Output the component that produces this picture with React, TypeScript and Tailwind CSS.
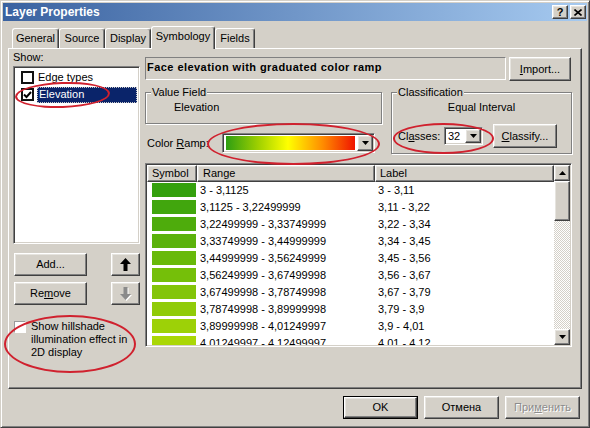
import React from "react";

const raised =
  "border border-t-white border-l-white border-r-[#404040] border-b-[#404040] shadow-[inset_-1px_-1px_0_#808080,inset_1px_1px_0_#e6e4df]";
const sunken =
  "border border-t-[#808080] border-l-[#808080] border-r-white border-b-white shadow-[inset_1px_1px_0_#404040,inset_-1px_-1px_0_#d4d0c8]";

const rows = [
  ["3 - 3,1125", "3 - 3,11"],
  ["3,1125 - 3,22499999", "3,11 - 3,22"],
  ["3,22499999 - 3,33749999", "3,22 - 3,34"],
  ["3,33749999 - 3,44999999", "3,34 - 3,45"],
  ["3,44999999 - 3,56249999", "3,45 - 3,56"],
  ["3,56249999 - 3,67499998", "3,56 - 3,67"],
  ["3,67499998 - 3,78749998", "3,67 - 3,79"],
  ["3,78749998 - 3,89999998", "3,79 - 3,9"],
  ["3,89999998 - 4,01249997", "3,9 - 4,01"],
  ["4,01249997 - 4,12499997", "4,01 - 4,12"],
];

const stops: [number, number[]][] = [
  [0, [52, 160, 14]],
  [0.5, [255, 255, 0]],
  [0.75, [255, 140, 0]],
  [1, [235, 20, 0]],
];

// colour of class i in a 32-class green-yellow-red ramp
function rampColor(i: number, n = 32) {
  const t = i / (n - 1);
  for (let k = 1; k < stops.length; k++) {
    const [t0, c0] = stops[k - 1];
    const [t1, c1] = stops[k];
    if (t <= t1) {
      const s = (t - t0) / (t1 - t0);
      const c = c0.map((v, j) => Math.round(v + (c1[j] - v) * s));
      return `rgb(${c.join(",")})`;
    }
  }
  return "rgb(235,20,0)";
}

const SmallArrow = ({ up = false }: { up?: boolean }) => (
  <svg width="7" height="4" viewBox="0 0 7 4">
    <path d={up ? "M3.5 0L7 4H0z" : "M0 0h7L3.5 4z"} fill="#000" />
  </svg>
);

const Btn = ({
  children,
  className = "",
}: {
  children: React.ReactNode;
  className?: string;
}) => (
  <div className={`${raised} flex items-center justify-center bg-[#d4d0c8] ${className}`}>
    {children}
  </div>
);

const CheckBox = ({ checked = false }: { checked?: boolean }) => (
  <div className="w-[13px] h-[13px] border-2 border-[#111] bg-white flex items-center justify-center shrink-0">
    {checked && (
      <svg width="9" height="8" viewBox="0 0 9 8">
        <path d="M1 3.5L3.5 6L8 1" stroke="#000" strokeWidth="2" fill="none" />
      </svg>
    )}
  </div>
);

export default function App() {
  return (
    <div className="relative w-[590px] h-[428px] overflow-hidden bg-[#d4d0c8] border border-t-[#d4d0c8] border-l-[#d4d0c8] border-r-[#404040] border-b-[#404040] shadow-[inset_1px_1px_0_#fff,inset_-1px_-1px_0_#808080] p-[2px] flex flex-col text-[11px] leading-[13px] text-black font-[family-name:Liberation_Sans,Arial,sans-serif]">
      {/* title bar */}
      <div className="h-[18px] shrink-0 flex items-center justify-between pl-[2px] pr-[1px] bg-[linear-gradient(to_right,#3a62a0,#a6caf0)]">
        <span className="text-white font-bold text-[12px]">Layer Properties</span>
        <div className="flex gap-[2px]">
          <Btn className="w-[16px] h-[14px] font-bold text-[11px]">?</Btn>
          <Btn className="w-[16px] h-[14px]">
            <svg width="8" height="7" viewBox="0 0 8 7">
              <path d="M0.5 0.5L7.5 6.5M7.5 0.5L0.5 6.5" stroke="#000" strokeWidth="1.6" />
            </svg>
          </Btn>
        </div>
      </div>

      {/* tabs */}
      <div className="mt-[5px] h-[22px] shrink-0 pl-[9px] flex items-end">
        {[
          ["General", "w-[47px]"],
          ["Source", "w-[46px]"],
          ["Display", "w-[46px]"],
          ["Symbology", "w-[64px]"],
          ["Fields", "w-[40px]"],
        ].map(([t, w]) =>
          t === "Symbology" ? (
            <div
              key={t}
              className={`${w} relative z-10 -mb-[1px] h-[23px] pb-[3px] bg-[#d4d0c8] flex items-center justify-center border border-b-0 border-t-white border-l-white border-r-[#404040] rounded-t-[3px] shadow-[inset_-1px_0_0_#808080]`}
            >
              {t}
            </div>
          ) : (
            <div
              key={t}
              className={`${w} h-[20px] flex items-center justify-center border border-b-0 border-t-white border-l-white border-r-[#404040] rounded-t-[3px] shadow-[inset_-1px_0_0_#808080]`}
            >
              {t}
            </div>
          )
        )}
      </div>

      {/* tab page */}
      <div className="ml-[5px] mr-[5px] h-[341px] shrink-0 border border-t-white border-l-white border-r-[#404040] border-b-[#404040] shadow-[inset_-1px_-1px_0_#808080] flex pl-[4px] pt-[2px]">
        {/* left column */}
        <div className="w-[127px] flex flex-col">
          <div className="h-[15px]">Show:</div>
          <div className={`${sunken} h-[178px] bg-white p-[1px] pt-[2px]`}>
            <div className="h-[17px] flex items-center pl-[6px]">
              <CheckBox />
              <span className="ml-[4px]">Edge types</span>
            </div>
            <div className="h-[17px] flex items-center pl-[6px]">
              <CheckBox checked />
              <span className="ml-[3px] flex-1 mr-[1px] h-[16px] flex items-center pl-[2px] bg-[#0a246a] text-white outline-1 outline-dotted outline-[#c8c8c8] -outline-offset-1">
                Elevation
              </span>
            </div>
          </div>

          <div className="mt-[9px] flex justify-between pl-[1px]">
            <Btn className="w-[73px] h-[23px]">Add...</Btn>
            <Btn className="w-[29px] h-[23px]">
              <svg width="11" height="13" viewBox="0 0 11 13">
                <path d="M5.5 0L11 6H7.5V13H3.5V6H0Z" fill="#000" />
              </svg>
            </Btn>
          </div>
          <div className="mt-[6px] flex justify-between pl-[1px]">
            <Btn className="w-[73px] h-[23px]">
              <span>
                Re<span className="underline">m</span>ove
              </span>
            </Btn>
            <Btn className="w-[29px] h-[23px]">
              <svg width="12" height="14" viewBox="0 0 12 14">
                <path d="M6.5 14L12 8H8.5V1H4.5V8H1Z" fill="#fff" />
                <path d="M5.5 13L11 7H7.5V0H3.5V7H0Z" fill="#8a8a8a" />
              </svg>
            </Btn>
          </div>

          <div className="mt-[15px] flex items-start pl-[1px]">
            <div className="mt-[1px] w-[12px] h-[12px] shrink-0 bg-white border border-t-[#9a9a9a] border-l-[#9a9a9a] border-r-white border-b-white" />
            <div className="ml-[5px] leading-[13px]">
              Show hillshade
              <br />
              illumination effect in
              <br />
              2D display
            </div>
          </div>
        </div>

        {/* right column */}
        <div className="ml-[5px] w-[427px] mt-[6px] flex flex-col">
          <div className="flex">
            <div className="w-[361px] h-[23px] border border-t-[#808080] border-l-[#808080] border-r-white border-b-white pl-[1px] pt-[3px] font-bold tracking-[0.45px]">
              Face elevation with graduated color ramp
            </div>
            <Btn className="ml-[3px] w-[62px] h-[24px]">
              <span>
                <span className="underline">I</span>mport...
              </span>
            </Btn>
          </div>

          <div className="mt-[11px] flex">
            <div className="w-[237px] flex flex-col">
              <div className="h-[32px] border border-[#808080] shadow-[inset_1px_1px_0_#fff,1px_1px_0_#fff]">
                <div className="-mt-[7px] ml-[5px] px-[1px] w-fit bg-[#d4d0c8]">Value Field</div>
                <div className="mt-[2px] pl-[28px]">Elevation</div>
              </div>
              <div className="mt-[9px] flex items-center">
                <div className="w-[77px] pl-[2px]">
                  Color <span className="underline">R</span>amp:
                </div>
                <div className={`${sunken} w-[153px] h-[20px] bg-white p-[1px] flex items-center`}>
                  <div className="ml-[2px] w-[129px] h-[14px] bg-[linear-gradient(to_right,#2e9e12,#9fd000_25%,#ffff00_48%,#ff8c00_75%,#f01400)]" />
                  <Btn className="ml-auto w-[16px] h-[16px]">
                    <SmallArrow />
                  </Btn>
                </div>
              </div>
            </div>

            <div className="ml-[9px] w-[181px] h-[62px] border border-[#808080] shadow-[inset_1px_1px_0_#fff,1px_1px_0_#fff]">
              <div className="-mt-[7px] ml-[5px] px-[1px] w-fit bg-[#d4d0c8]">Classification</div>
              <div className="mt-[2px] text-center">Equal Interval</div>
              <div className="mt-[10px] flex items-center pl-[6px]">
                <div className="w-[46px]">
                  Cl<span className="underline">a</span>sses:
                </div>
                <div className={`${sunken} w-[39px] h-[18px] bg-white p-[1px] flex items-center`}>
                  <span className="pl-[2px]">32</span>
                  <Btn className="ml-auto w-[16px] h-[14px]">
                    <SmallArrow />
                  </Btn>
                </div>
                <Btn className="ml-[10px] w-[64px] h-[24px]">
                  <span>
                    <span className="underline">C</span>lassify...
                  </span>
                </Btn>
              </div>
            </div>
          </div>

          {/* class table */}
          <div className={`${sunken} mt-[9px] h-[184px] p-[1px] flex bg-white`}>
            <div className="flex-1 flex flex-col overflow-hidden">
              <div className="h-[17px] shrink-0 flex bg-[#d4d0c8]">
                <div className={`${raised} w-[50px] pl-[4px] flex items-center`}>Symbol</div>
                <div className={`${raised} w-[178px] pl-[5px] flex items-center`}>Range</div>
                <div className={`${raised} flex-1 pl-[4px] flex items-center`}>Label</div>
              </div>
              <div className="flex-1 overflow-hidden">
                {rows.map(([range, label], i) => (
                  <div key={range} className="h-[17px] flex">
                    <div className="w-[50px]">
                      <div
                        className="ml-[5px] mt-[1px] w-[44px] h-[14px]"
                        style={{ backgroundColor: rampColor(i) }}
                      />
                    </div>
                    <div className="w-[178px] pl-[3px] leading-[17px]">{range}</div>
                    <div className="flex-1 pl-[3px] leading-[17px]">{label}</div>
                  </div>
                ))}
              </div>
            </div>
            <div className="w-[16px] flex flex-col">
              <Btn className="w-[16px] h-[16px] shrink-0">
                <SmallArrow up />
              </Btn>
              <Btn className="w-[16px] h-[40px] shrink-0">{null}</Btn>
              <div className="flex-1 bg-[image:repeating-conic-gradient(#d4d0c8_0%_25%,#ffffff_0%_50%)] bg-size-[2px_2px]" />
              <Btn className="w-[16px] h-[16px] shrink-0">
                <SmallArrow />
              </Btn>
            </div>
          </div>
        </div>
      </div>

      {/* dialog buttons */}
      <div className="mt-[7px] flex justify-end gap-[6px] pr-[7px]">
        <div className="w-[75px] h-[23px] border border-black">
          <Btn className="w-full h-full">OK</Btn>
        </div>
        <Btn className="w-[75px] h-[23px]">Отмена</Btn>
        <Btn className="w-[75px] h-[23px] text-[#8c8c8c] [text-shadow:1px_1px_0_#fff]">
          <span>
            При<span className="underline">м</span>енить
          </span>
        </Btn>
      </div>

      {/* red annotation ellipses */}
      <div className="absolute left-[14px] top-[81px] w-[95px] h-[26px] rounded-[50%] border-2 border-[#d0212e] -rotate-2" />
      <div className="absolute left-[206px] top-[122px] w-[173px] h-[42px] rounded-[50%] border-2 border-[#d0212e]" />
      <div className="absolute left-[392px] top-[122px] w-[101px] h-[31px] rounded-[50%] border-2 border-[#d0212e]" />
      <div className="absolute left-[3px] top-[314px] w-[132px] h-[58px] rounded-[50%] border-2 border-[#d0212e]" />
    </div>
  );
}
